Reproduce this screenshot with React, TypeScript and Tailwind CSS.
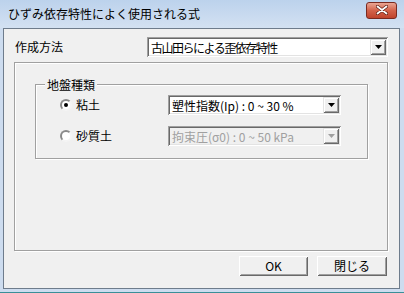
import React from "react";

const font = { fontFamily: '"Noto Sans CJK JP", "Noto Sans", sans-serif' };

function DropArrow({ disabled }: { disabled?: boolean }) {
  return (
    <svg width="7" height="4" viewBox="0 0 7 4">
      <polygon points="0,0 7,0 3.5,4" fill={disabled ? "#a0a0a0" : "#000"} />
    </svg>
  );
}

function Combo({
  text,
  width,
  disabled,
  tight,
}: {
  text: string;
  width: string;
  disabled?: boolean;
  tight?: boolean;
}) {
  return (
    <div
      className={`${width} h-[20px] flex items-center p-[2px] shadow-[inset_1px_1px_0_#a0a0a0,inset_-1px_-1px_0_#ffffff,inset_2px_2px_0_#696969,inset_-2px_-2px_0_#e3e3e3] ${
        disabled ? "bg-[#f0f0f0]" : "bg-white"
      }`}
    >
      <div
        className={`flex-1 pl-[2px] text-[12px] leading-[15px] whitespace-nowrap ${
          tight ? "tracking-[-1.5px]" : ""
        } ${disabled ? "text-[#a0a0a0]" : "text-black"}`}
      >
        {text}
      </div>
      <div className="w-[16px] h-[16px] flex items-center justify-center bg-[#f0f0f0] shadow-[inset_1px_1px_0_#e3e3e3,inset_-1px_-1px_0_#696969,inset_2px_2px_0_#ffffff,inset_-2px_-2px_0_#a0a0a0]">
        <DropArrow disabled={disabled} />
      </div>
    </div>
  );
}

function Radio({ checked }: { checked?: boolean }) {
  return (
    <div className="w-[12px] h-[12px] rounded-full border-2 border-t-[#8a8a8a] border-l-[#8a8a8a] border-b-[#f4f4f4] border-r-[#f4f4f4] bg-white flex items-center justify-center">
      {checked && <div className="w-[4px] h-[4px] rounded-full bg-black" />}
    </div>
  );
}

function Button({ label, width }: { label: string; width: string }) {
  return (
    <div
      className={`${width} h-[20px] flex items-center justify-center bg-[#f0f0f0] text-[12px] leading-none text-black shadow-[inset_1px_1px_0_#ffffff,inset_-1px_-1px_0_#696969,inset_2px_2px_0_#f0f0f0,inset_-2px_-2px_0_#a0a0a0]`}
    >
      {label}
    </div>
  );
}

export default function App() {
  return (
    <div
      className="w-[404px] h-[293px] flex flex-col bg-[#cddcef] pl-[3px] pr-[4px] pb-[3px] border-b-[1px] border-[#3a8f98]"
      style={font}
    >
      {/* title bar */}
      <div className="h-[28px] flex items-center justify-between bg-gradient-to-b from-[#bcd2ec] to-[#d3e1f2] -ml-[3px] -mr-[4px] pl-[8px] pr-[7px]">
        <span className="text-[12px] leading-none text-black">ひずみ依存特性によく使用される式</span>
        <div className="w-[31px] h-[17px] mb-[8px] rounded-[3px] border border-[#7a2a20] bg-gradient-to-b from-[#e9a593] via-[#d3624a] to-[#c0432c] flex items-center justify-center">
          <svg width="12" height="10" viewBox="0 0 12 10">
            <path d="M1.5 1.5 L10.5 8.5 M10.5 1.5 L1.5 8.5" stroke="#5a1a10" strokeWidth="3.2" strokeLinecap="round" />
            <path d="M1.5 1.5 L10.5 8.5 M10.5 1.5 L1.5 8.5" stroke="#ffffff" strokeWidth="1.8" strokeLinecap="round" />
          </svg>
        </div>
      </div>

      {/* client area */}
      <div className="flex-1 flex flex-col bg-[#f0f0f0] border border-[#6e7c8c] pt-[8px]">
        <div className="h-[20px] flex items-center">
          <div className="w-[143px] pl-[11px] text-[12px] leading-none text-black">作成方法</div>
          <Combo text="古山田らによる歪依存特性" width="w-[241px]" tight />
        </div>

        {/* outer panel */}
        <div className="ml-[10px] mt-[5px] w-[374px] h-[189px] border border-[#a0a0a0] shadow-[1px_1px_0_#ffffff,inset_1px_1px_0_#ffffff] pt-[21px] pl-[20px]">
          {/* group box */}
          <div className="w-[333px] h-[75px] border border-[#a0a0a0] shadow-[1px_1px_0_#ffffff,inset_1px_1px_0_#ffffff] flex flex-col">
            <span className="self-start ml-[9px] -mt-[7px] px-[2px] bg-[#f0f0f0] text-[12px] leading-[13px] text-black">
              地盤種類
            </span>
            <div className="mt-[4px] h-[20px] flex items-center">
              <div className="w-[24px]" />
              <Radio checked />
              <span className="ml-[4px] w-[92px] text-[12px] leading-none text-black">粘土</span>
              <Combo text="塑性指数(Ip) : 0 ~ 30 %" width="w-[173px]" />
            </div>
            <div className="mt-[11px] h-[20px] flex items-center">
              <div className="w-[24px]" />
              <Radio />
              <span className="ml-[4px] w-[92px] text-[12px] leading-none text-black">砂質土</span>
              <Combo text="拘束圧(σ0) : 0 ~ 50 kPa" width="w-[173px]" disabled />
            </div>
          </div>
        </div>

        <div className="mt-[5px] flex justify-end gap-[9px] pr-[12px]">
          <Button label="OK" width="w-[69px]" />
          <Button label="閉じる" width="w-[70px]" />
        </div>
      </div>
    </div>
  );
}
